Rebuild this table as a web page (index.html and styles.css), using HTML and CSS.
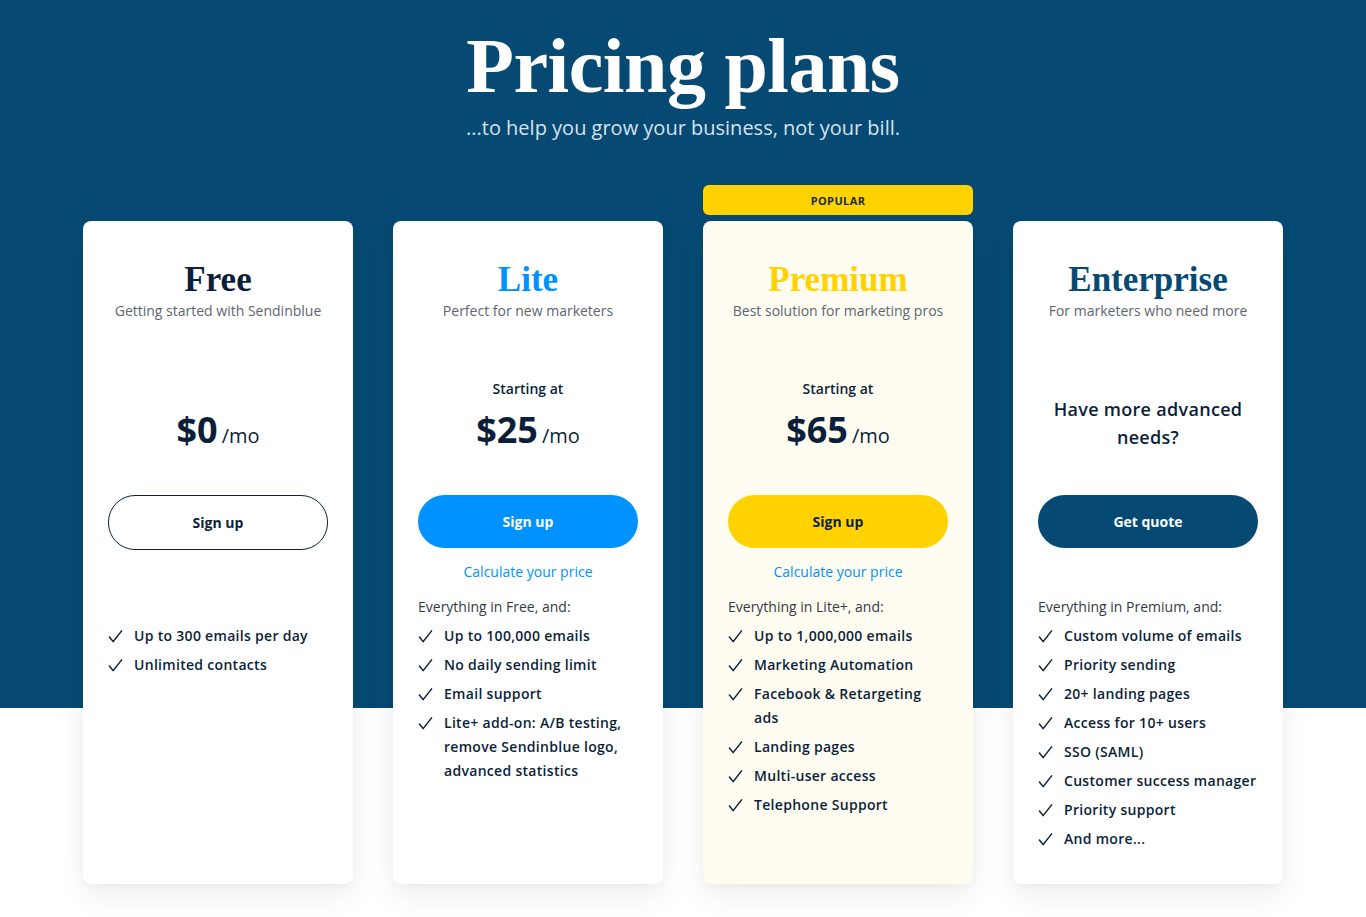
FILE: index.html
```html
<!DOCTYPE html>
<html lang="en">
<head>
<meta charset="utf-8">
<title>Pricing plans</title>
<link rel="stylesheet" href="styles.css">
</head>
<body>
<header class="hero">
  <h1 class="hero-title">Pricing plans</h1>
  <p class="hero-sub">...to help you grow your business, not your bill.</p>
</header>

<main class="plans">
  <section class="plan-col">
    <div class="badge-slot"></div>
    <div class="card">
      <h2 class="plan-name plan-free">Free</h2>
      <p class="plan-desc">Getting started with Sendinblue</p>
      <div class="price-area">
        <div class="price"><span class="amount">$0</span><span class="per">/mo</span></div>
      </div>
      <a class="btn btn-outline" href="#">Sign up</a>
      <div class="calc placeholder">&nbsp;</div>
      <div class="intro placeholder">&nbsp;</div>
      <ul class="features">
        <li><svg class="check" viewBox="0 0 16 16"><path d="M1.5 8.5 L5.5 13.5 L14.5 2"/></svg><span>Up to 300 emails per day</span></li>
        <li><svg class="check" viewBox="0 0 16 16"><path d="M1.5 8.5 L5.5 13.5 L14.5 2"/></svg><span>Unlimited contacts</span></li>
      </ul>
    </div>
  </section>

  <section class="plan-col">
    <div class="badge-slot"></div>
    <div class="card">
      <h2 class="plan-name plan-lite">Lite</h2>
      <p class="plan-desc">Perfect for new marketers</p>
      <div class="price-area">
        <div class="starting">Starting at</div>
        <div class="price"><span class="amount">$25</span><span class="per">/mo</span></div>
      </div>
      <a class="btn btn-blue" href="#">Sign up</a>
      <a class="calc" href="#">Calculate your price</a>
      <div class="intro">Everything in Free, and:</div>
      <ul class="features">
        <li><svg class="check" viewBox="0 0 16 16"><path d="M1.5 8.5 L5.5 13.5 L14.5 2"/></svg><span>Up to 100,000 emails</span></li>
        <li><svg class="check" viewBox="0 0 16 16"><path d="M1.5 8.5 L5.5 13.5 L14.5 2"/></svg><span>No daily sending limit</span></li>
        <li><svg class="check" viewBox="0 0 16 16"><path d="M1.5 8.5 L5.5 13.5 L14.5 2"/></svg><span>Email support</span></li>
        <li><svg class="check" viewBox="0 0 16 16"><path d="M1.5 8.5 L5.5 13.5 L14.5 2"/></svg><span>Lite+ add-on: A/B testing, remove Sendinblue logo, advanced statistics</span></li>
      </ul>
    </div>
  </section>

  <section class="plan-col">
    <div class="badge-slot"><div class="badge">POPULAR</div></div>
    <div class="card card-premium">
      <h2 class="plan-name plan-premium">Premium</h2>
      <p class="plan-desc">Best solution for marketing pros</p>
      <div class="price-area">
        <div class="starting">Starting at</div>
        <div class="price"><span class="amount">$65</span><span class="per">/mo</span></div>
      </div>
      <a class="btn btn-yellow" href="#">Sign up</a>
      <a class="calc" href="#">Calculate your price</a>
      <div class="intro">Everything in Lite+, and:</div>
      <ul class="features">
        <li><svg class="check" viewBox="0 0 16 16"><path d="M1.5 8.5 L5.5 13.5 L14.5 2"/></svg><span>Up to 1,000,000 emails</span></li>
        <li><svg class="check" viewBox="0 0 16 16"><path d="M1.5 8.5 L5.5 13.5 L14.5 2"/></svg><span>Marketing Automation</span></li>
        <li><svg class="check" viewBox="0 0 16 16"><path d="M1.5 8.5 L5.5 13.5 L14.5 2"/></svg><span>Facebook &amp; Retargeting ads</span></li>
        <li><svg class="check" viewBox="0 0 16 16"><path d="M1.5 8.5 L5.5 13.5 L14.5 2"/></svg><span>Landing pages</span></li>
        <li><svg class="check" viewBox="0 0 16 16"><path d="M1.5 8.5 L5.5 13.5 L14.5 2"/></svg><span>Multi-user access</span></li>
        <li><svg class="check" viewBox="0 0 16 16"><path d="M1.5 8.5 L5.5 13.5 L14.5 2"/></svg><span>Telephone Support</span></li>
      </ul>
    </div>
  </section>

  <section class="plan-col">
    <div class="badge-slot"></div>
    <div class="card">
      <h2 class="plan-name plan-enterprise">Enterprise</h2>
      <p class="plan-desc">For marketers who need more</p>
      <div class="price-area">
        <div class="advanced">Have more advanced needs?</div>
      </div>
      <a class="btn btn-navy" href="#">Get quote</a>
      <div class="calc placeholder">&nbsp;</div>
      <div class="intro">Everything in Premium, and:</div>
      <ul class="features">
        <li><svg class="check" viewBox="0 0 16 16"><path d="M1.5 8.5 L5.5 13.5 L14.5 2"/></svg><span>Custom volume of emails</span></li>
        <li><svg class="check" viewBox="0 0 16 16"><path d="M1.5 8.5 L5.5 13.5 L14.5 2"/></svg><span>Priority sending</span></li>
        <li><svg class="check" viewBox="0 0 16 16"><path d="M1.5 8.5 L5.5 13.5 L14.5 2"/></svg><span>20+ landing pages</span></li>
        <li><svg class="check" viewBox="0 0 16 16"><path d="M1.5 8.5 L5.5 13.5 L14.5 2"/></svg><span>Access for 10+ users</span></li>
        <li><svg class="check" viewBox="0 0 16 16"><path d="M1.5 8.5 L5.5 13.5 L14.5 2"/></svg><span>SSO (SAML)</span></li>
        <li><svg class="check" viewBox="0 0 16 16"><path d="M1.5 8.5 L5.5 13.5 L14.5 2"/></svg><span>Customer success manager</span></li>
        <li><svg class="check" viewBox="0 0 16 16"><path d="M1.5 8.5 L5.5 13.5 L14.5 2"/></svg><span>Priority support</span></li>
        <li><svg class="check" viewBox="0 0 16 16"><path d="M1.5 8.5 L5.5 13.5 L14.5 2"/></svg><span>And more...</span></li>
      </ul>
    </div>
  </section>
</main>
</body>
</html>
```

FILE: styles.css
```css
* { box-sizing: border-box; }

html, body { margin: 0; padding: 0; }

body {
  font-family: "Open Sans", "Noto Sans", sans-serif;
  color: #0b1f3a;
  background: linear-gradient(to bottom, #064a73 0, #064a73 708px, #ffffff 708px);
  min-height: 917px;
}

.hero {
  padding-top: 21px;
  text-align: center;
}

.hero-title {
  margin: 0;
  font-family: "Liberation Serif", "Times New Roman", serif;
  font-weight: 700;
  font-size: 78px;
  line-height: 90px;
  color: #ffffff;
  letter-spacing: -0.5px;
}

.hero-sub {
  margin: 3px 0 0;
  font-size: 20px;
  line-height: 28px;
  color: #d6e2ec;
}

.plans {
  display: grid;
  grid-template-columns: repeat(4, 270px);
  column-gap: 40px;
  justify-content: center;
  margin-top: 43px;
}

.plan-col {
  display: flex;
  flex-direction: column;
}

.badge-slot {
  height: 30px;
  margin-bottom: 6px;
}

.badge {
  height: 30px;
  border-radius: 6px;
  background: #ffd200;
  color: #1b2a3d;
  font-size: 11px;
  font-weight: 700;
  letter-spacing: 0.4px;
  display: flex;
  align-items: center;
  justify-content: center;
}

.card {
  height: 663px;
  background: #ffffff;
  border-radius: 8px;
  padding: 38px 25px 0;
  box-shadow: 0 12px 30px rgba(0, 0, 0, 0.07), 0 2px 6px rgba(0, 0, 0, 0.03);
  display: flex;
  flex-direction: column;
}

.card-premium { background: #fffdf2; }

.plan-name {
  margin: 0;
  text-align: center;
  font-family: "Liberation Serif", "Times New Roman", serif;
  font-weight: 700;
  font-size: 35px;
  line-height: 42px;
}

.plan-free { color: #0b1f3a; }
.plan-lite { color: #0092ff; }
.plan-premium { color: #ffd200; }
.plan-enterprise { color: #064a73; }

.plan-desc {
  margin: 0;
  text-align: center;
  font-size: 14px;
  line-height: 20px;
  color: #5c6670;
}

.price-area {
  height: 174px;
  display: flex;
  flex-direction: column;
  justify-content: flex-end;
  align-items: center;
  padding-bottom: 37px;
}

.starting {
  font-size: 14px;
  font-weight: 600;
  line-height: 20px;
  margin-bottom: 9px;
}

.price {
  line-height: 44px;
  display: flex;
  align-items: baseline;
}

.amount {
  font-size: 36px;
  font-weight: 700;
}

.per {
  font-size: 20px;
  margin-left: 4px;
}

.advanced {
  font-size: 18px;
  font-weight: 600;
  line-height: 28px;
  text-align: center;
  letter-spacing: 0.3px;
  padding: 0 10px;
  margin-bottom: 7px;
}

.btn {
  display: flex;
  align-items: center;
  justify-content: center;
  height: 53px;
  border-radius: 27px;
  font-size: 14px;
  font-weight: 700;
  text-decoration: none;
}

.btn-outline {
  border: 1px solid #0b1f3a;
  color: #0b1f3a;
  background: transparent;
  height: 55px;
  margin-bottom: -2px;
}

.btn-blue { background: #0092ff; color: #ffffff; }
.btn-yellow { background: #ffd200; color: #0b1f3a; }
.btn-navy { background: #064a73; color: #ffffff; }

.calc {
  display: block;
  margin-top: 14px;
  text-align: center;
  font-size: 14px;
  line-height: 20px;
  color: #0092ff;
  text-decoration: none;
}

.intro {
  margin-top: 15px;
  font-size: 14px;
  line-height: 20px;
  color: #333a42;
}

.placeholder { visibility: hidden; }

.features {
  list-style: none;
  margin: 7px 0 0;
  padding: 0;
  display: flex;
  flex-direction: column;
  gap: 5px;
}

.features li {
  display: flex;
  align-items: flex-start;
  font-size: 14px;
  font-weight: 600;
  line-height: 24px;
  letter-spacing: 0.3px;
  color: #0b1f3a;
}

.check {
  flex: none;
  width: 15px;
  height: 15px;
  margin-top: 5px;
  margin-right: 11px;
  fill: none;
  stroke: #0b1f3a;
  stroke-width: 1.6;
  stroke-linecap: round;
  stroke-linejoin: round;
}
```
